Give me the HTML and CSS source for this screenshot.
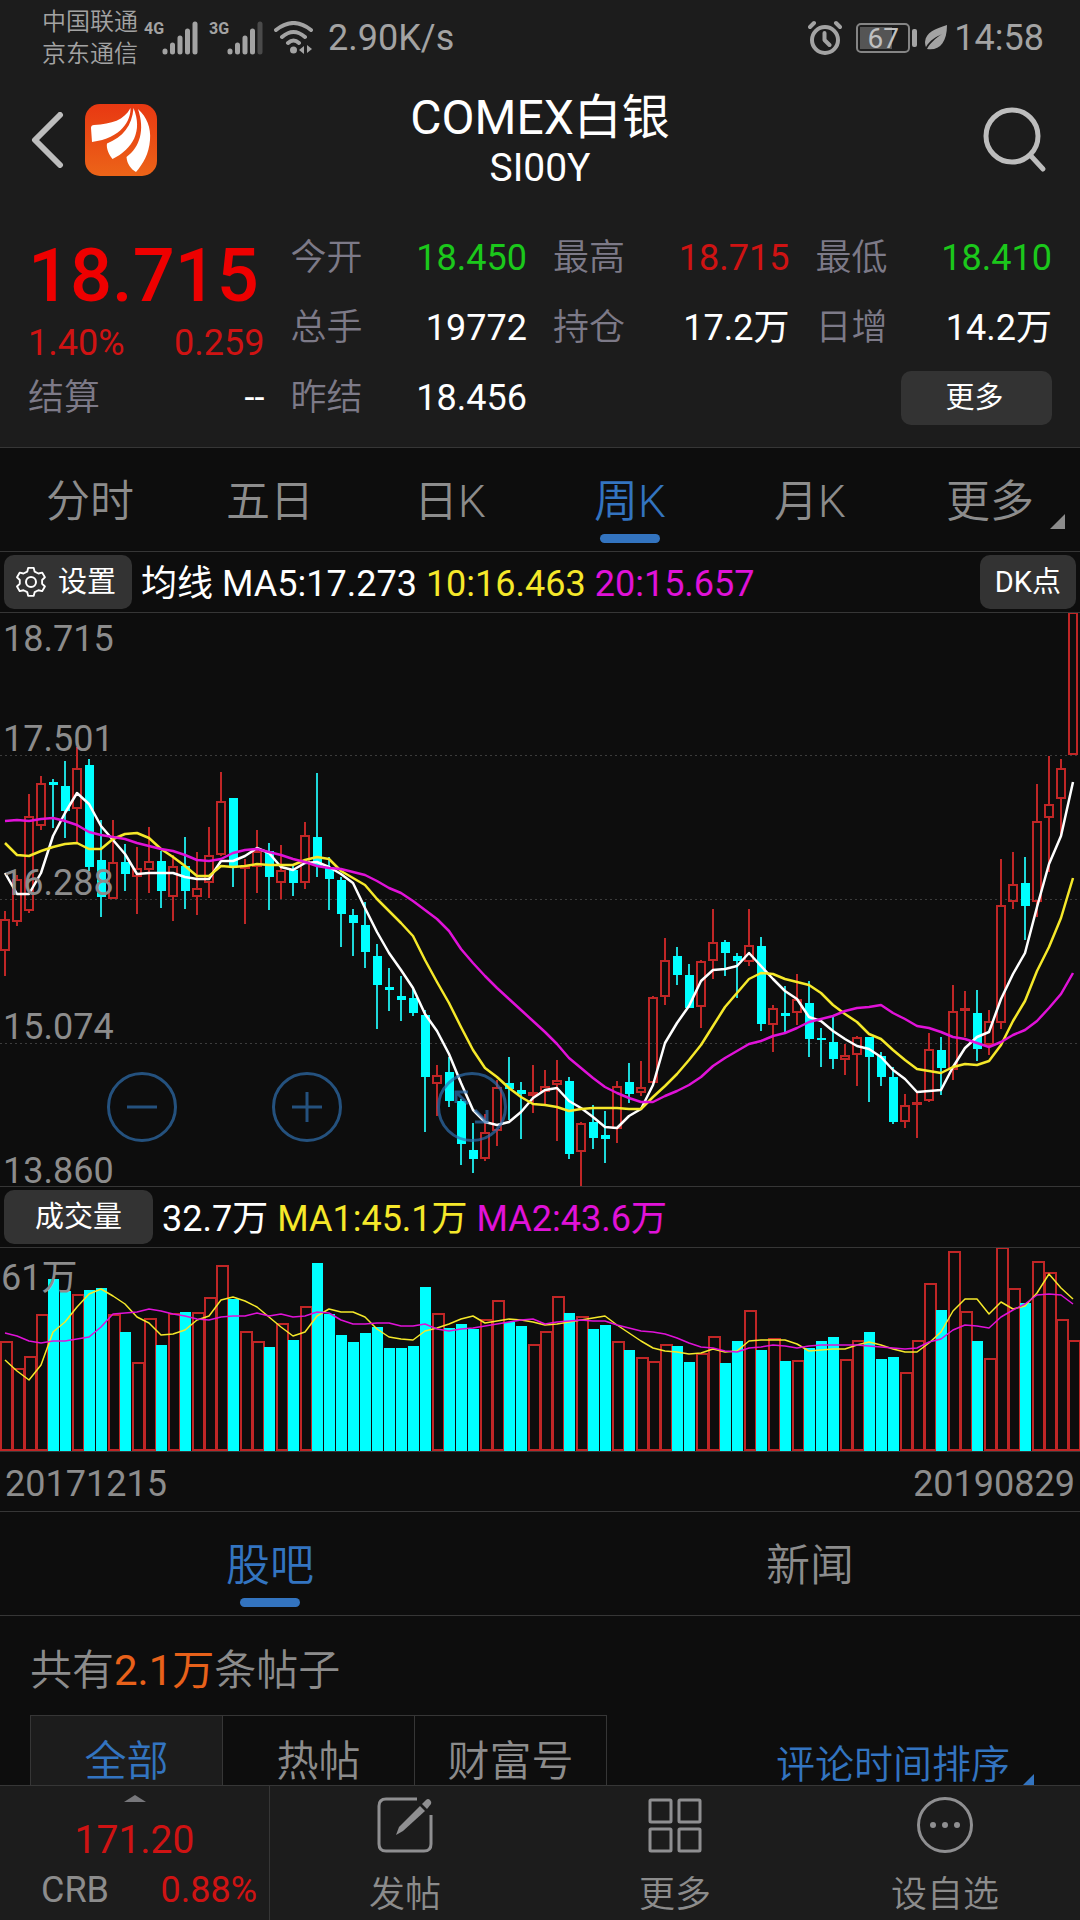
FILE: index.html
```html
<!DOCTYPE html>
<html lang="zh-CN">
<head>
    <meta charset="UTF-8">
    <meta name="viewport" content="width=device-width, initial-scale=1.0">
    <title>COMEX白银 SI00Y</title>
    <link rel="stylesheet" href="styles.css">
</head>
<body>

    <div class="statusbar">
        <div class="carriers">
            <span>中国联通</span>
            <span>京东通信</span>
        </div>
        <div class="signal">
            <span class="net">4G</span>
            <svg width="36" height="34" viewBox="0 0 36 34" stroke="#a3a3a3" stroke-width="5" stroke-linecap="round">
                <path d="M3 30v1M10.500 24v7M18 17v14M25.500 10v21M33 3v28"/>
            </svg>
        </div>
        <div class="signal">
            <span class="net">3G</span>
            <svg width="36" height="34" viewBox="0 0 36 34" stroke="#a3a3a3" stroke-width="5" stroke-linecap="round">
                <path d="M3 30v1M10.500 24v7M18 17v14M25.500 10v21"/>
                <path d="M33 3v28" stroke="#4a4a4a"/>
            </svg>
        </div>
        <svg class="wifi" width="40" height="34" viewBox="0 0 40 34" fill="none" stroke="#a3a3a3" stroke-width="4" stroke-linecap="round">
            <path d="M2 9Q19.500 -5 37 9M8 16Q19.500 6 31 16M14 22Q19.500 17 25 22"/>
            <circle cx="19.500" cy="29" r="3.500" fill="#a3a3a3" stroke="none"/>
            <path d="M25 29l5 -4v8zM38 28l-5 -4v8z" fill="#a3a3a3" stroke="none"/>
        </svg>
        <span class="speed">2.90K/s</span>

        <svg class="alarm" width="34" height="36" viewBox="0 0 34 36" fill="none" stroke="#a3a3a3" stroke-width="4" stroke-linecap="round" stroke-linejoin="round">
            <circle cx="17" cy="20" r="13"/>
            <path d="M16.500 13v7l5 5M2 7l4 -4M32 7l-4 -4"/>
        </svg>
        <div class="battery"><span>67</span></div>
        <svg class="leaf" width="24" height="26" viewBox="0 0 24 26">
            <path d="M23 0C11 4 2 7 1 17c0 3 1 5 1 5C6 15 12 12 18 9 11 14 6 18 3 24c12 2 20 -6 20 -24z" fill="#a3a3a3"/>
        </svg>
        <time>14:58</time>
    </div>

    <header class="topbar">
        <div class="side">
            <button class="icon-btn" aria-label="返回">
                <svg width="34" height="56" viewBox="0 0 34 56" fill="none" stroke="#bdbdbd" stroke-width="6" stroke-linecap="round" stroke-linejoin="round">
                    <path d="M29 3L4 28l25 25"/>
                </svg>
            </button>
            <svg class="logo" width="72" height="72" viewBox="0 0 72 72">
                <defs>
                    <linearGradient id="logoBg" x1="0" y1="0" x2="0" y2="1">
                        <stop offset="0" stop-color="#e83812"/>
                        <stop offset="1" stop-color="#ec6418"/>
                    </linearGradient>
                </defs>
                <rect width="72" height="72" rx="15" fill="url(#logoBg)"/>
                <g fill="#fff">
                    <path d="M6 24Q6 21 9 21C27 20 39 16 45.500 4C46 16 37 34 7 38Z"/>
                    <path d="M48.500 4C47 22 38 33 22 39.500C21 44 24 51 27.500 55C48 45 58 27 48.500 4Z"/>
                    <path d="M53 5C62 13 66 24 65 36C64 50 58 60 51 68C46 65 42 60 41.500 53C55 43 60 26 53 5Z"/>
                </g>
            </svg>
        </div>
        <div class="title">
            <h1>COMEX白银</h1>
            <p>SI00Y</p>
        </div>
        <div class="side side-right">
            <button class="icon-btn" aria-label="搜索">
                <svg width="66" height="66" viewBox="0 0 66 66" fill="none" stroke="#bdbdbd" stroke-width="5" stroke-linecap="round">
                    <circle cx="29" cy="29" r="26"/>
                    <path d="M48 49l12 13"/>
                </svg>
            </button>
        </div>
    </header>

    <section class="quote">
        <div class="quote-main">
            <div class="price">18.715</div>
            <div class="pair change red"><span>1.40%</span><span>0.259</span></div>
            <div class="pair"><label>结算</label><span>--</span></div>
        </div>
        <div class="quote-col">
            <div class="pair"><label>今开</label><span class="green">18.450</span></div>
            <div class="pair"><label>总手</label><span>19772</span></div>
            <div class="pair"><label>昨结</label><span>18.456</span></div>
        </div>
        <div class="quote-col">
            <div class="pair"><label>最高</label><span class="red">18.715</span></div>
            <div class="pair"><label>持仓</label><span>17.2万</span></div>
        </div>
        <div class="quote-col">
            <div class="pair"><label>最低</label><span class="green">18.410</span></div>
            <div class="pair"><label>日增</label><span>14.2万</span></div>
            <div class="pair pair-end"><button class="chip chip-more">更多</button></div>
        </div>
    </section>

    <main>
        <nav class="tabs">
            <button>分时</button>
            <button>五日</button>
            <button>日K</button>
            <button class="active">周K</button>
            <button>月K</button>
            <button class="has-corner">更多</button>
        </nav>

        <div class="legend">
            <button class="chip">
                <svg width="30" height="32" viewBox="0 0 30 32" fill="none" stroke="#fff" stroke-width="2" stroke-linejoin="round">
                    <path d="M12 1h6l1 4 4 2 4 -1 3 5 -3 3v4l3 3 -3 5 -4 -1 -4 2 -1 4h-6l-1 -4 -4 -2 -4 1 -3 -5 3 -3v-4l-3 -3 3 -5 4 1 4 -2z" transform="translate(1 1) scale(.93)"/>
                    <circle cx="15" cy="16" r="5"/>
                </svg>
                设置
            </button>
            <span>均线</span>
            <span>MA5:17.273</span>
            <span class="yellow">10:16.463</span>
            <span class="magenta">20:15.657</span>
            <button class="chip chip-right">DK点</button>
        </div>

        <div class="chart">
            <svg id="kline" viewBox="0 1 1080 573"></svg>
            <div class="chart-tools">
                <button aria-label="缩小">
                    <svg width="70" height="70" viewBox="0 0 70 70"><circle cx="35" cy="35" r="33.500"/><path d="M20 35h30"/></svg>
                </button>
                <button aria-label="放大">
                    <svg width="70" height="70" viewBox="0 0 70 70"><circle cx="35" cy="35" r="33.500"/><path d="M20 35h30M35 20v30"/></svg>
                </button>
                <button aria-label="全屏">
                    <svg width="70" height="70" viewBox="0 0 70 70"><circle cx="35" cy="35" r="33.500"/><path d="M19 31V20h12M20 21l11 11M50 38v12H38M49 49L38 38"/></svg>
                </button>
            </div>
        </div>

        <div class="legend">
            <button class="chip chip-volume">成交量</button>
            <span>32.7万</span>
            <span class="yellow">MA1:45.1万</span>
            <span class="magenta">MA2:43.6万</span>
        </div>

        <div class="chart">
            <svg id="volume" viewBox="0 1 1080 203"></svg>
        </div>
        <div class="dates"><span>20171215</span><span>20190829</span></div>

        <nav class="tabs tabs-sub">
            <button class="active">股吧</button>
            <button>新闻</button>
        </nav>

        <section class="posts">
            <p class="count">共有<b>2.1万</b>条帖子</p>
            <div class="filters">
                <button class="active">全部</button>
                <button>热帖</button>
                <button>财富号</button>
                <button class="sort">评论时间排序</button>
            </div>
        </section>
    </main>

    <footer class="bottombar">
        <a href="#" class="index">
            <i class="caret"></i>
            <strong>171.20</strong>
            <span class="index-row"><span>CRB</span><span class="red">0.88%</span></span>
        </a>
        <a href="#">
            <svg width="56" height="56" viewBox="0 0 56 56" fill="none" stroke="#8f8f91" stroke-width="3">
                <path d="M40 2H9Q2 2 2 9v38Q2 54 9 54h38Q54 54 54 47V18"/>
                <path d="M19 38l3 -8L43 9l5 5L26 34z" fill="#8f8f91" stroke="none"/>
                <path d="M45 7l4 -4q2 -2 4 0t1 4l-4 5z" fill="#8f8f91" stroke="none"/>
            </svg>
            发帖
        </a>
        <a href="#">
            <svg width="56" height="56" viewBox="0 0 56 56" fill="none" stroke="#8f8f91" stroke-width="3">
                <rect x="3" y="3" width="21" height="22" rx="1"/>
                <rect x="32" y="3" width="21" height="22" rx="1"/>
                <rect x="3" y="32" width="21" height="22" rx="1"/>
                <rect x="32" y="32" width="21" height="22" rx="1"/>
            </svg>
            更多
        </a>
        <a href="#">
            <svg width="56" height="56" viewBox="0 0 56 56" fill="#8f8f91">
                <circle cx="28" cy="28" r="26.500" fill="none" stroke="#8f8f91" stroke-width="3"/>
                <circle cx="16" cy="28" r="3"/><circle cx="28" cy="28" r="3"/><circle cx="40" cy="28" r="3"/>
            </svg>
            设自选
        </a>
    </footer>

    <script src="chart.js"></script>
</body>
</html>
```

FILE: styles.css
```css
:root {
    --bg: #0d0d0d;
    --panel: #1c1c1c;
    --line: #363636;
    --chip: #333333;
    --grey: #8c8c8c;
    --label: #7d7a88;
    --red: #cf1313;
    --green: #1bc81b;
    --blue: #3374c0;
    --yellow: #f5e82a;
    --magenta: #e012d8;
}

* {
    box-sizing: border-box;
}

body {
    margin: 0;
    height: 100vh;
    display: flex;
    flex-direction: column;
    overflow: hidden;
    background: var(--bg);
    color: #fff;
    font-family: Roboto, "Noto Sans CJK SC", sans-serif;
    font-size: 36px;
    line-height: 1;
}

/* the CJK face is set lighter than the digits */
label,
.carriers,
.tabs,
.posts,
.bottombar {
    font-weight: 350;
}

h1,
p {
    margin: 0;
    font-weight: 400;
}

button {
    padding: 0;
    border: none;
    background: none;
    color: inherit;
    font: inherit;
    cursor: pointer;
}

a {
    color: inherit;
    text-decoration: none;
}

svg {
    display: block;
    flex: none;
}

.red { color: var(--red); }
.green { color: var(--green); }
.yellow { color: var(--yellow); }
.magenta { color: var(--magenta); }

/* status bar */
.statusbar {
    display: flex;
    align-items: center;
    flex: none;
    height: 76px;
    padding: 0 36px 0 42px;
    background: var(--panel);
    color: #a3a3a3;
}

.carriers {
    display: flex;
    flex-direction: column;
    font-size: 24px;
    line-height: 32px;
    margin-right: 6px;
}

.signal {
    display: flex;
    margin-right: 11px;
}

.net {
    font-size: 16px;
    font-weight: 700;
    width: 18px;
}

.wifi {
    margin-right: 14px;
}

.alarm {
    margin: 0 14px 0 auto;
}

.battery {
    position: relative;
    width: 54px;
    height: 30px;
    margin-right: 14px;
    border: 2px solid #858585;
    border-radius: 5px;
    background: linear-gradient(#555, #555) 2px 2px / 32px 22px no-repeat;
    color: #c0c0c0;
    font-size: 28px;
    line-height: 27px;
    text-align: center;
}

.battery::after {
    content: "";
    position: absolute;
    right: -9px;
    top: 4px;
    width: 5px;
    height: 18px;
    border-radius: 2px;
    background: #a3a3a3;
}

.leaf {
    margin-right: 6px;
}

/* title bar */
.topbar {
    display: flex;
    align-items: center;
    flex: none;
    height: 127px;
    padding: 0 31px;
    background: var(--panel);
}

.side {
    display: flex;
    align-items: center;
    gap: 20px;
    flex: 1;
}

.side-right {
    justify-content: flex-end;
}

.title {
    text-align: center;
}

.title h1 {
    font-size: 48px;
    line-height: 56px;
}

.title p {
    font-size: 39px;
    line-height: 44px;
}

/* quote block */
.quote {
    display: grid;
    grid-template-columns: repeat(4, 1fr);
    column-gap: 26px;
    flex: none;
    padding: 20px 28px 14px;
    background: var(--panel);
    border-bottom: 1px solid var(--line);
}

.pair {
    display: flex;
    align-items: center;
    justify-content: space-between;
    height: 70px;
}

.pair label {
    color: var(--label);
}

.pair-end {
    justify-content: flex-end;
}

.pair.change {
    height: 50px;
}

.price {
    height: 90px;
    font-size: 74px;
    font-weight: 500;
    line-height: 106px;
    color: #ee0000;
}

.pair.change {
    padding-top: 10px;
}

.chip {
    display: flex;
    align-items: center;
    justify-content: center;
    gap: 12px;
    height: 54px;
    padding: 0 16px 0 12px;
    border-radius: 10px;
    background: var(--chip);
    color: #fff;
    font-size: 29px;
}

.chip-more {
    width: 151px;
}

.chip-right {
    margin-left: auto;
    padding: 0 15px;
}

.chip-volume {
    padding: 0 31px;
}

main {
    flex: 1;
    min-height: 0;
    overflow: hidden;
}

/* period tabs */
.tabs {
    display: flex;
    height: 104px;
    border-bottom: 1px solid var(--line);
    color: var(--grey);
    font-size: 44px;
}

.tabs button {
    position: relative;
    flex: 1;
    padding-top: 5px;
}

.tabs .active {
    color: var(--blue);
}

.tabs .active::after {
    content: "";
    position: absolute;
    left: 50%;
    bottom: 8px;
    width: 60px;
    height: 9px;
    margin-left: -30px;
    border-radius: 5px;
    background: var(--blue);
}

.has-corner::after,
.sort::after {
    content: "";
    position: absolute;
    right: 15px;
    bottom: 22px;
    border-left: 15px solid transparent;
    border-bottom: 15px solid var(--grey);
}

/* indicator rows */
.legend {
    display: flex;
    align-items: center;
    gap: 9px;
    height: 61px;
    padding: 0 4px;
    border-bottom: 1px solid var(--line);
}

.legend span {
    padding-top: 3px;
}

.chart {
    position: relative;
    border-bottom: 1px solid var(--line);
}

.chart svg {
    width: 100%;
    height: auto;
}

.chart-tools {
    position: absolute;
    left: 107px;
    bottom: 44px;
    display: flex;
    gap: 95px;
}

.chart-tools svg {
    width: 70px;
    fill: none;
    stroke: #2f6fae;
    stroke-width: 3;
    opacity: 0.7;
}

/* svg parts */
.grid {
    stroke: #3c3c3c;
    stroke-dasharray: 2 3;
}

.up {
    fill: none;
    stroke: #c02626;
    stroke-width: 2;
}

.down {
    fill: #00ffff;
    stroke: none;
}

.wick-up {
    stroke: #c02626;
    stroke-width: 2;
}

.wick-down {
    stroke: #1ed8da;
    stroke-width: 2;
}

.ma {
    fill: none;
    stroke-width: 1.5;
    stroke-linejoin: round;
}

#kline .ma {
    stroke-width: 2.5;
}

.ma-white { stroke: #fff; }
.ma-yellow { stroke: var(--yellow); }
.ma-magenta { stroke: var(--magenta); }

.axis {
    fill: var(--grey);
    font-size: 36px;
}

.dates {
    display: flex;
    justify-content: space-between;
    align-items: center;
    height: 60px;
    padding: 4px 5px 0;
    border-bottom: 1px solid var(--line);
    color: var(--grey);
}

/* posts */
.posts {
    padding: 34px 46px 0 30px;
    color: var(--grey);
    font-size: 42px;
}

.count {
    line-height: 42px;
    font-weight: inherit;
}

.count b {
    color: #e8611a;
    font-weight: 400;
}

.filters {
    display: flex;
    margin-top: 23px;
}

.filters button {
    width: 193px;
    height: 94px;
    margin-right: -1px;
    border: 1px solid var(--line);
}

.filters .active {
    background: var(--panel);
    color: var(--blue);
}

.filters .sort {
    position: relative;
    width: auto;
    margin: 3px 0 0 auto;
    padding-right: 24px;
    border: none;
    color: var(--blue);
    font-size: 39px;
}

.sort::after {
    right: 0;
    bottom: 26px;
    border-left-width: 12px;
    border-bottom: 12px solid var(--blue);
}

/* bottom bar */
.bottombar {
    display: grid;
    grid-template-columns: repeat(4, 1fr);
    flex: none;
    height: 135px;
    border-top: 1px solid var(--line);
    background: var(--panel);
    color: var(--grey);
}

.bottombar a {
    display: flex;
    flex-direction: column;
    align-items: center;
    gap: 24px;
    padding-top: 11px;
}

.bottombar .index {
    gap: 0;
    padding: 9px 12px 0;
    border-right: 1px solid var(--line);
    font-weight: 400;
}

.caret {
    border: 11px solid transparent;
    border-top: 0;
    border-bottom: 7px solid #77777b;
}

.index strong {
    margin-top: 19px;
    color: var(--red);
    font-size: 39px;
    font-weight: 400;
}

.index-row {
    display: flex;
    justify-content: space-between;
    align-self: stretch;
    margin-top: 12px;
    padding-left: 29px;
}
```

FILE: chart.js
```javascript
// one row per week: [rising, high, body top, body bottom, low, volume top]
const weeks = [
    [1,299,307,339,364,94], [1,263,267,310,314,121], [1,182,204,299,301,109], [1,164,171,214,218,67], [0,167,170,173,216,32],
    [0,149,174,199,226,44], [1,135,156,197,231,47], [0,147,153,255,259,43], [0,208,248,285,305,41], [1,208,250,287,287,67],
    [0,232,250,262,279,85], [1,235,256,265,302,115], [1,215,249,258,281,71], [0,239,249,279,296,98], [1,243,254,285,309,66],
    [0,225,254,279,297,65], [1,240,276,285,303,65], [1,215,243,271,286,50], [1,160,189,243,244,18], [0,186,186,254,275,52],
    [1,247,254,256,312,84], [1,218,239,255,281,94], [0,231,239,265,298,100], [1,233,258,271,287,76], [0,254,258,271,284,93],
    [1,210,223,271,277,59], [0,161,225,254,265,16], [0,245,255,267,298,67], [0,265,268,302,335,88], [0,297,303,311,344,95],
    [0,290,313,340,356,86], [0,332,344,373,417,80], [0,356,375,378,399,101], [0,364,384,388,409,101], [0,376,386,401,404,99],
    [0,398,403,465,520,40], [1,453,463,472,504,66], [0,445,460,489,495,81], [0,487,489,532,553,77], [0,511,538,547,561,82],
    [1,502,520,547,549,72], [1,468,475,519,534,53], [0,445,471,477,508,75], [0,470,478,482,527,79], [1,453,480,484,501,97],
    [1,458,474,480,494,84], [1,448,468,473,529,49], [0,465,469,542,547,66], [1,510,511,540,574,69], [0,493,510,526,537,82],
    [0,499,523,527,551,78], [1,469,474,517,531,94], [0,451,470,482,491,103], [1,449,475,481,484,110], [1,384,385,471,472,114],
    [1,326,348,385,393,97], [0,335,344,363,373,99], [0,352,363,396,396,115], [1,348,349,395,416,106], [1,297,330,349,367,89],
    [0,328,330,341,364,116], [0,341,344,349,386,94], [1,297,333,350,354,63], [0,325,334,412,419,103], [1,393,396,413,440,91],
    [0,374,401,404,422,114], [1,362,387,401,413,113], [0,369,391,427,445,101], [0,416,426,428,455,94], [0,403,430,447,457,90],
    [1,432,443,448,463,112], [1,424,425,443,474,93], [0,425,425,445,490,85], [0,440,444,465,474,112], [0,455,465,510,512,110],
    [1,482,493,510,516,125], [1,480,490,493,526,93], [1,421,437,489,490,36], [0,425,438,456,483,63], [1,373,399,458,468,4],
    [1,379,396,398,425,64], [0,378,401,437,449,94], [1,398,409,433,443,111], [1,247,293,411,417,0], [1,240,272,290,297,41],
    [0,245,271,294,328,56], [1,172,209,290,305,14], [1,144,192,206,260,25], [1,147,156,187,224,72], [1,0,0,143,143,93]
];

const ma5 = [261,282,282,261,224,201,181,192,214,228,242,262,261,261,261,265,267,267,249,249,244,236,241,255,258,251,250,255,262,271,
    296,320,341,358,376,402,419,442,471,498,510,513,510,500,486,478,476,489,496,505,515,516,504,497,473,431,411,394,369,358,
    357,354,341,354,367,379,387,405,409,419,427,434,437,445,458,467,480,479,478,455,436,425,420,387,362,341,295,252,224,170];
const ma10 = [231,243,244,239,235,232,231,237,237,227,222,221,226,237,245,254,264,264,254,255,254,252,253,253,253,248,245,247,259,266,
    273,287,299,311,324,348,370,391,415,438,456,465,476,485,492,493,495,499,497,496,496,496,497,497,485,474,462,448,433,414,
    395,381,367,361,362,367,370,373,381,393,402,410,422,427,438,448,457,459,461,455,452,453,449,433,409,389,359,335,306,266];
const ma20 = [209,208,209,207,206,209,213,220,223,225,227,231,234,237,239,243,248,249,247,241,238,237,240,243,247,250,254,256,257,260,
    263,269,276,281,289,298,307,319,337,351,364,376,387,398,409,420,432,446,456,466,475,481,486,490,490,484,479,473,465,454,
    446,439,432,429,424,421,416,410,407,404,399,396,395,393,401,407,414,416,420,425,427,431,435,430,423,418,409,396,382,361];

const volMa1 = [113,124,133,118,85,75,60,47,42,49,57,70,76,88,87,83,73,69,53,50,54,60,70,80,89,85,69,62,65,65,
    70,82,90,92,93,84,81,77,72,69,76,74,72,73,75,78,77,75,73,71,69,78,86,94,101,104,105,107,106,102,
    105,104,94,93,93,93,97,104,103,102,102,98,95,98,102,105,105,96,85,64,52,52,67,55,62,59,46,27,41,52];
const volMa2 = [86,89,94,96,94,94,92,90,80,67,66,65,62,64,67,69,72,73,70,69,69,66,69,67,70,69,65,66,73,77,
    77,76,76,79,79,77,82,84,82,81,79,77,75,73,72,77,75,74,73,74,74,78,81,84,85,87,91,96,100,101,
    104,105,101,100,98,99,101,99,98,98,98,98,99,100,101,102,101,95,92,83,78,79,81,70,63,57,48,47,48,57];

const step = 12;

function line(values, color) {
    const points = values.map((y, i) => `${i * step + 5},${y}`).join(" ");
    return `<polyline class="ma ma-${color}" points="${points}"/>`;
}

function drawKline() {
    let out = "";
    for (const y of [143, 287, 431]) {
        out += `<path class="grid" d="M0 ${y}.5H1080"/>`;
    }
    weeks.forEach(([up, high, top, bottom, low], i) => {
        const x = i * step + 5;
        if (up) {
            out += `<path class="wick-up" d="M${x} ${high}V${top}M${x} ${bottom}V${low}"/>`;
            out += `<rect class="up" x="${x - 4}" y="${top + 1}" width="8" height="${Math.max(bottom - top - 2, 1)}"/>`;
        } else {
            out += `<path class="wick-down" d="M${x} ${high}V${low}"/>`;
            out += `<rect class="down" x="${x - 4}" y="${top}" width="9" height="${bottom - top}"/>`;
        }
    });
    out += line(ma5, "white") + line(ma10, "yellow") + line(ma20, "magenta");

    const labels = { "18.715": 39, "17.501": 139, "16.288": 283, "15.074": 427, "13.860": 571 };
    for (const price in labels) {
        out += `<text class="axis" x="3" y="${labels[price]}">${price}</text>`;
    }
    document.getElementById("kline").innerHTML = out;
}

function drawVolume() {
    let out = "";
    weeks.forEach((week, i) => {
        const x = i * step;
        const top = week[5];
        if (week[0]) {
            out += `<rect class="up" x="${x + 1}" y="${top + 1}" width="11" height="${202 - top}"/>`;
        } else {
            out += `<rect class="down" x="${x}" y="${top}" width="11" height="${204 - top}"/>`;
        }
    });
    out += line(volMa1, "yellow") + line(volMa2, "magenta");
    out += `<text class="axis" x="1" y="43">61万</text>`;
    document.getElementById("volume").innerHTML = out;
}

drawKline();
drawVolume();
```
